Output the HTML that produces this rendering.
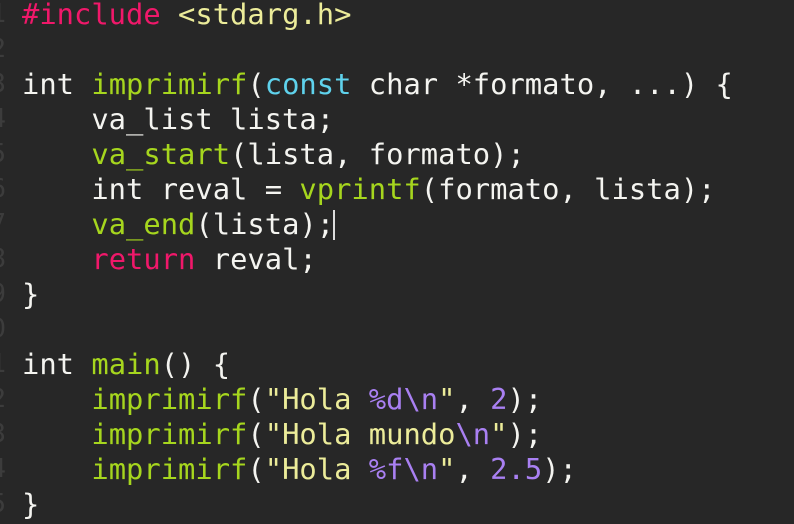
<!DOCTYPE html>
<html><head><style>
html,body{margin:0;padding:0;background:#272727;width:794px;height:524px;overflow:hidden}
pre{position:absolute;left:22px;top:-3px;margin:0;font-family:"DejaVu Sans Mono","Liberation Mono",monospace;font-size:28.8px;line-height:35px;color:#f4f4f0;letter-spacing:0}
.ln{position:absolute;left:-14px;top:-3px;margin:0;font-family:"DejaVu Sans Mono",monospace;font-size:26px;line-height:35px;color:#3c3c3c;text-align:right;width:20px}
.k{color:#f0186a}.f{color:#a6d61e}.c{color:#5fd2ec}.n{color:#a980f2}.s{color:#ecec9a}
.cur{display:inline-block;width:2px;height:30px;background:#ddd;vertical-align:-6px;margin-left:-1px}
</style></head><body>
<pre class="ln">1
2
3
4
5
6
7
8
9
0
1
2
3
4
5</pre>
<pre><span class="k">#include</span> <span class="s">&lt;stdarg.h&gt;</span>

int <span class="f">imprimirf</span>(<span class="c">const</span> char *formato, ...) {
    va_list lista;
    <span class="f">va_start</span>(lista, formato);
    int reval = <span class="f">vprintf</span>(formato, lista);
    <span class="f">va_end</span>(lista);<span class="cur"></span>
    <span class="k">return</span> reval;
}

int <span class="f">main</span>() {
    <span class="f">imprimirf</span>(<span class="s">"Hola <span class="n">%d\n</span>"</span>, <span class="n">2</span>);
    <span class="f">imprimirf</span>(<span class="s">"Hola mundo<span class="n">\n</span>"</span>);
    <span class="f">imprimirf</span>(<span class="s">"Hola <span class="n">%f\n</span>"</span>, <span class="n">2.5</span>);
}</pre>
</body></html>
